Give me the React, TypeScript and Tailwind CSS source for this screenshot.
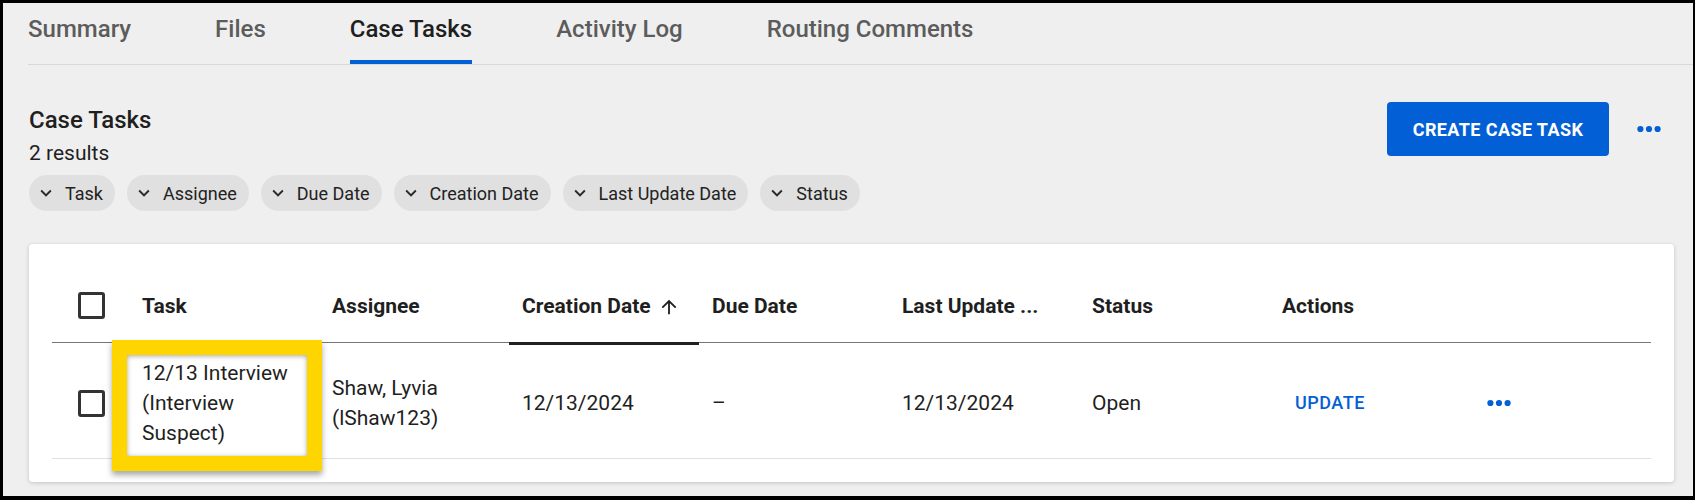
import React from "react";

function Dots() {
  return (
    <svg width="24" height="8" viewBox="0 0 24 8" fill="#035fd5" aria-hidden="true">
      <circle cx="3.4" cy="4" r="3.1" />
      <circle cx="12" cy="4" r="3.1" />
      <circle cx="20.6" cy="4" r="3.1" />
    </svg>
  );
}

function Chevron() {
  return (
    <svg width="22" height="22" viewBox="0 0 24 24" fill="#2a2a2a" aria-hidden="true">
      <path d="M16.59 8.59 12 13.17 7.41 8.59 6 10l6 6 6-6z" />
    </svg>
  );
}

function ArrowUp() {
  return (
    <svg width="22" height="22" viewBox="0 0 24 24" fill="#1f1f1f" aria-hidden="true">
      <path d="M4 12l1.41 1.41L11 7.83V20h2V7.83l5.58 5.59L20 12l-8-8-8 8z" />
    </svg>
  );
}

function Box() {
  return <div className="h-[27px] w-[27px] rounded-[3px] border-[3px] border-[#333333]" />;
}

export default function App() {
  const tabs = ["Summary", "Files", "Case Tasks", "Activity Log", "Routing Comments"];
  const chips = ["Task", "Assignee", "Due Date", "Creation Date", "Last Update Date", "Status"];
  const grid = "grid grid-cols-[77px_repeat(7,190px)_1fr]";

  return (
    <div className="h-[500px] w-[1695px] overflow-hidden border-t-[3px] border-l-[3px] border-b-[4px] border-r-[2px] border-black bg-[#efefef] font-['Roboto','Liberation_Sans',sans-serif] text-[#1f1f1f]">
      {/* Tabs */}
      <div className="ml-[25px] flex gap-[84px] border-b border-[#d9d9d9]">
        {tabs.map((t) => (
          <div
            key={t}
            className={
              t === "Case Tasks"
                ? "border-b-4 border-[#035fd5] pt-[12px] pb-[17px] text-[24px] font-medium leading-[28px] text-[#1f1f1f]"
                : "border-b-4 border-transparent pt-[12px] pb-[17px] text-[24px] font-medium leading-[28px] text-[#5c5c5c]"
            }
          >
            {t}
          </div>
        ))}
      </div>

      <div className="pl-[26px] pr-[19px] pt-[41px]">
        {/* Section header */}
        <div className="flex items-start justify-between">
          <div>
            <h2 className="text-[24px] font-medium leading-[28px]">Case Tasks</h2>
            <div className="mt-[5px] text-[21px] leading-[28px]">2 results</div>
            <div className="mt-[8px] flex gap-[12px]">
              {chips.map((c) => (
                <div
                  key={c}
                  className="flex h-[36px] items-center gap-[8px] rounded-full bg-[#e0e0e0] pl-[6px] pr-[12px] text-[18px] text-[#222222]"
                >
                  <Chevron />
                  <span>{c}</span>
                </div>
              ))}
            </div>
          </div>
          <div className="-mt-[4px] flex items-center">
            <button className="h-[54px] w-[222px] rounded-[4px] bg-[#035fd5] text-[18px] font-bold tracking-[0.4px] text-white">
              CREATE CASE TASK
            </button>
            <button className="ml-[15px] flex h-[48px] w-[50px] items-center justify-center">
              <Dots />
            </button>
          </div>
        </div>

        {/* Card */}
        <div className="mt-[33px] rounded-[4px] bg-white px-[23px] pt-[24px] pb-[23px] shadow-[0_1px_4px_rgba(0,0,0,0.18)]">
          {/* Header row */}
          <div className={`${grid} h-[75px] border-b border-[#767676] text-[21px] font-bold`}>
            <div className="flex items-center pl-[26px]">
              <Box />
            </div>
            <div className="flex items-center pl-[13px] pt-[3px]">Task</div>
            <div className="flex items-center pl-[13px] pt-[3px]">Assignee</div>
            <div className="relative flex items-center pl-[13px] pt-[3px]">
              <span>Creation Date</span>
              <span className="ml-[7px] flex">
                <ArrowUp />
              </span>
              <span className="absolute bottom-[-3px] left-0 right-0 h-[3px] bg-[#212121]" />
            </div>
            <div className="flex items-center pl-[13px] pt-[3px]">Due Date</div>
            <div className="flex items-center pl-[13px] pt-[3px]">Last Update ...</div>
            <div className="flex items-center pl-[13px] pt-[3px]">Status</div>
            <div className="flex items-center pl-[13px] pt-[3px]">Actions</div>
            <div />
          </div>

          {/* Body row */}
          <div className={`${grid} h-[116px] border-b border-[#e0e0e0] text-[21px] leading-[30px]`}>
            <div className="flex items-center pl-[26px] pt-[5px]">
              <Box />
            </div>
            <div className="relative flex items-center pl-[13px] pt-[5px]">
              <div>
                <div>12/13 Interview</div>
                <div>(Interview</div>
                <div>Suspect)</div>
              </div>
              <div className="absolute top-[-3px] bottom-[-13px] left-[-17px] right-[-3px] border-[15px] border-[#ffd500] shadow-[0_4px_6px_rgba(0,0,0,0.35),inset_0_1px_5px_rgba(0,0,0,0.35)]" />
            </div>
            <div className="flex items-center pl-[13px] pt-[5px]">
              <div>
                <div>Shaw, Lyvia</div>
                <div>(lShaw123)</div>
              </div>
            </div>
            <div className="flex items-center pl-[13px] pt-[5px]">12/13/2024</div>
            <div className="flex items-center pl-[13px] pt-[5px]">–</div>
            <div className="flex items-center pl-[13px] pt-[5px]">12/13/2024</div>
            <div className="flex items-center pl-[13px] pt-[5px]">Open</div>
            <div className="flex items-center pl-[13px] pt-[5px]">
              <button className="px-[13px] text-[18px] font-medium tracking-[0.5px] text-[#035fd5]">UPDATE</button>
            </div>
            <div className="flex items-center pl-[13px] pt-[5px]">
              <button className="flex h-[40px] w-[54px] items-center justify-center">
                <Dots />
              </button>
            </div>
          </div>
        </div>
      </div>
    </div>
  );
}
